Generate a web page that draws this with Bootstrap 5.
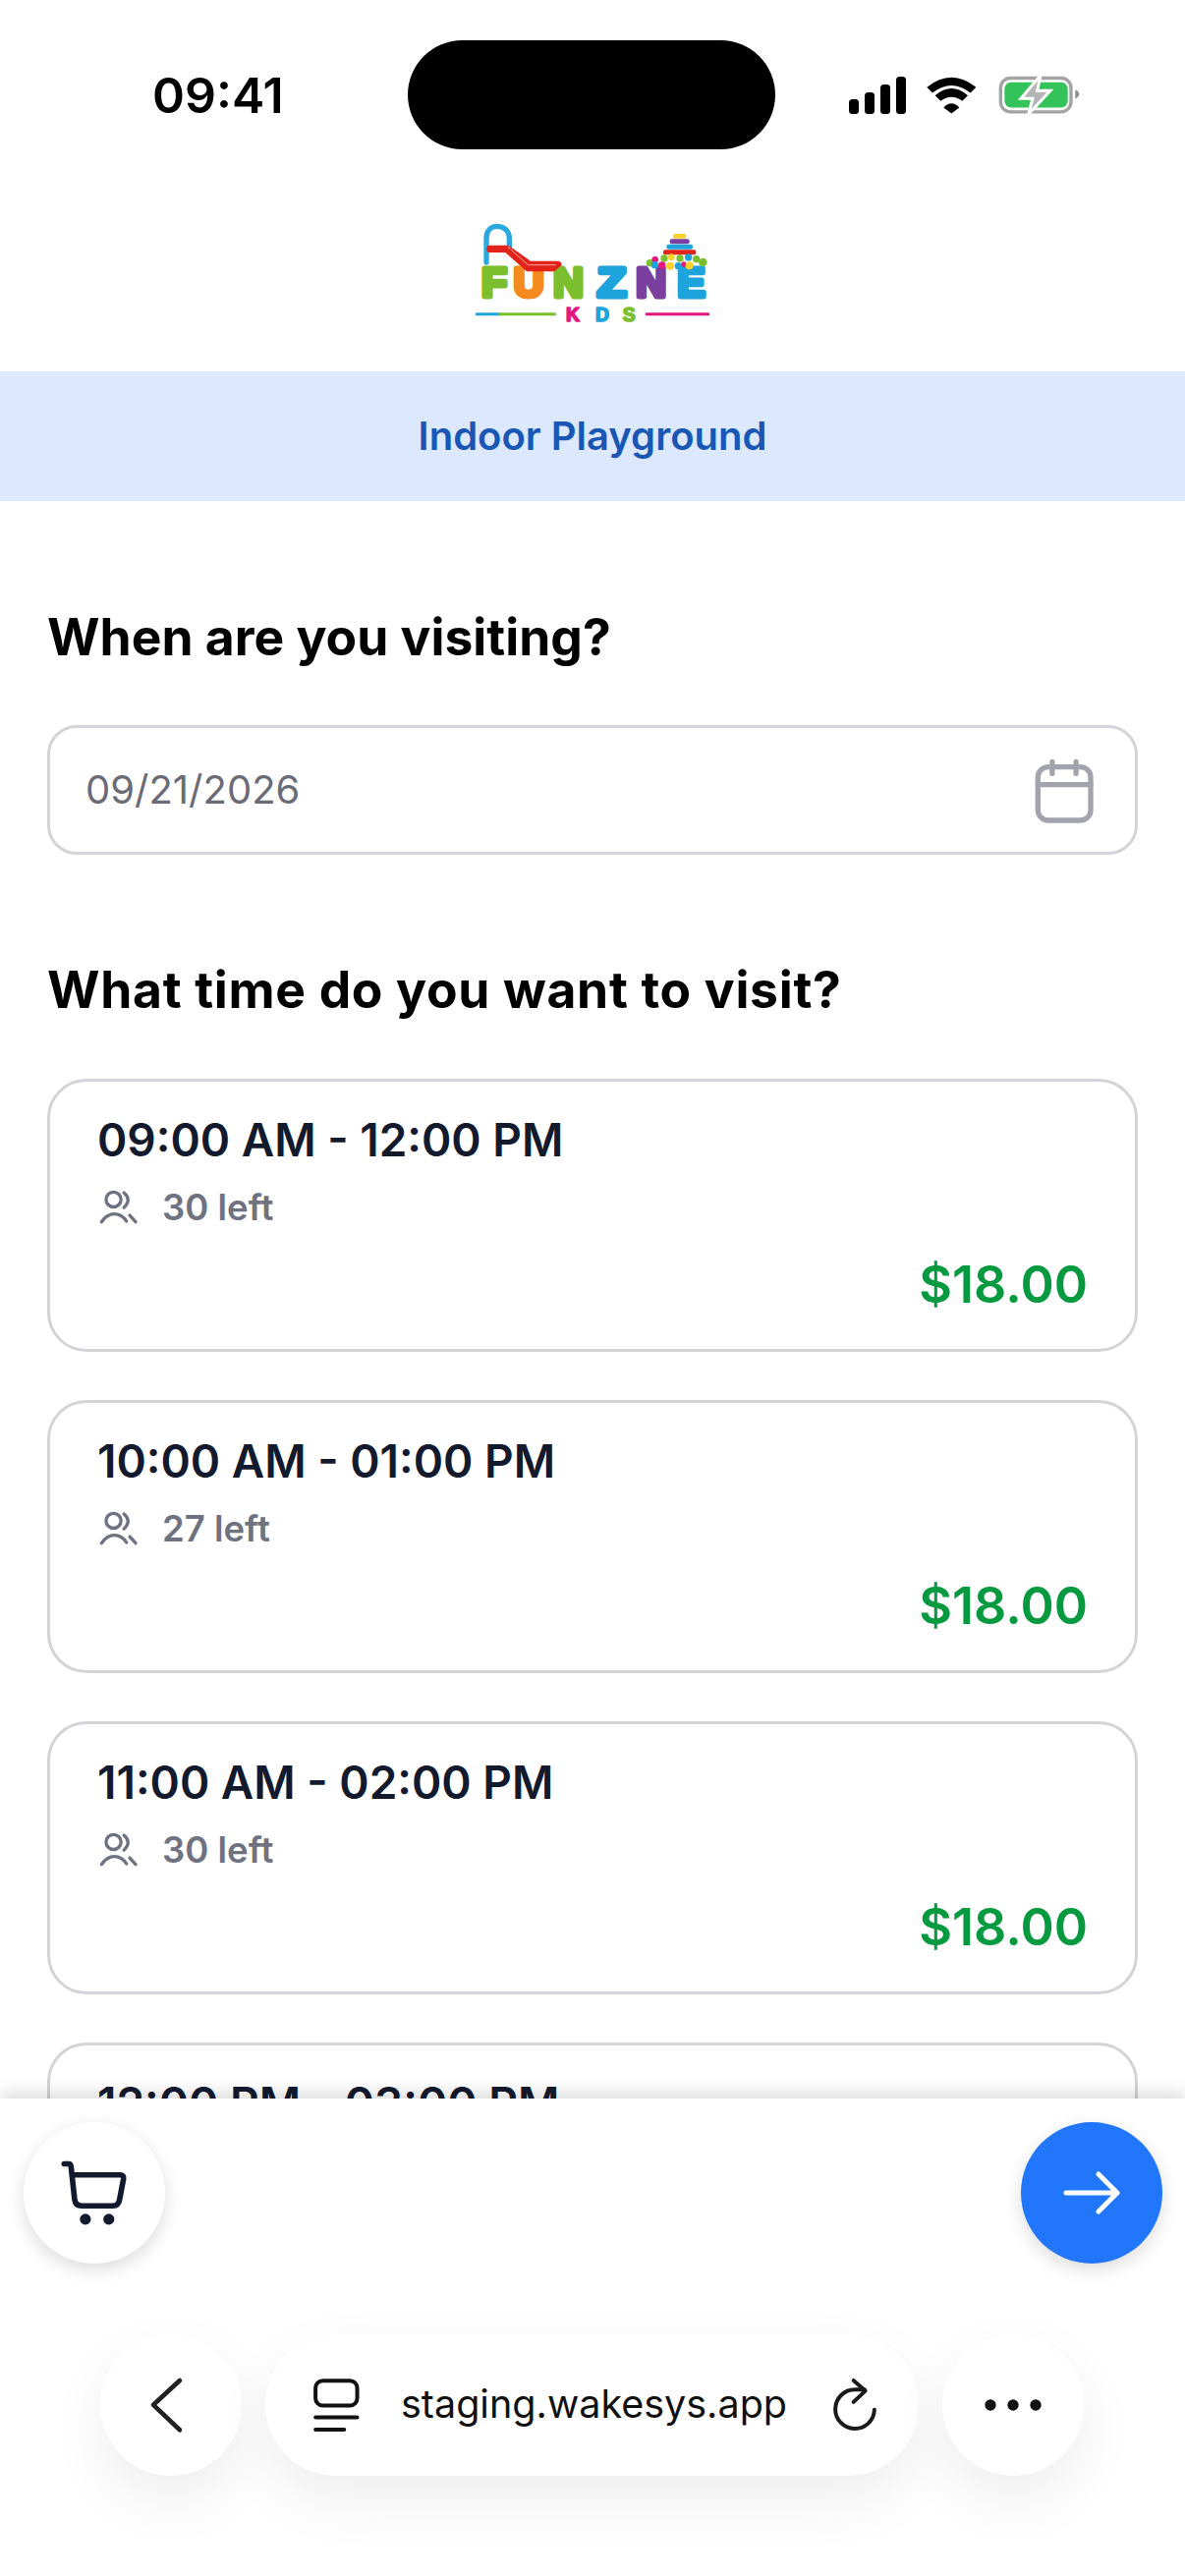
<!DOCTYPE html>
<html lang="en">
<head>
  <meta charset="UTF-8">
  <meta name="viewport" content="width=device-width, initial-scale=1.0">
  <title>Funzone Kids</title>
  <link href="https://cdn.jsdelivr.net/npm/bootstrap@5.3.3/dist/css/bootstrap.min.css" rel="stylesheet">
  <style>
    html, body { height: 2622px; }
    body {
      font-family: Inter, "Noto Sans", sans-serif;
      background: #fff;
      overflow: hidden;
    }
    .phone-page { width: 1206px; height: 2622px; }
    .status-row { height: 190px; padding: 41px 106px 38px 155px; }
    .status-time { font-size: 50px; font-weight: 600; color: #000; width: 260px; line-height: 113px; }
    .island { width: 375px; height: 111px; background: #000; border-radius: 56px; }
    .status-icons { height: 111px; margin-left: 75px; gap: 19px; }
    .logo-row { height: 188px; padding-right: 6px; }
    .logo-art { margin-top: -26px; }
    .venue-bar { height: 132px; background: #dbe8fe; color: #1a56b4; font-size: 40px; font-weight: 600; }
    .scroll-part { padding: 0 48px; height: 0; }
    .sec-title { font-size: 51.600px; font-weight: 700; color: #000; line-height: 64px; margin: 0; }
    .sec-title.first-title { margin-top: 106px; }
    .sec-title.wide-title { letter-spacing: .7px; }
    .date-box {
      height: 132px; margin: 58px 0 105px; padding: 0 40px 0 36px;
      border: 3px solid #d4d4d8; border-radius: 30px;
      color: #6b6b76; font-size: 40px;
    }
    .slot-list { gap: 49px; margin-top: 59px; }
    .slot-card {
      height: 278px; flex: none; padding: 28px 48px 0;
      border: 3px solid #d4d4d8; border-radius: 40px;
    }
    .slot-time { font-size: 46px; font-weight: 600; color: #141a2e; line-height: 62px; }
    .slot-left { font-size: 36.500px; font-weight: 600; color: #6f7280; line-height: 44px; margin-top: 16px; gap: 23px; }
    .slot-price { font-size: 52px; font-weight: 600; color: #059a3f; line-height: 64px; margin-top: 25px; }
    .bottom-part {
      height: 486px; position: relative; background: #fff;
      box-shadow: 0 -6px 16px rgba(0, 0, 0, .14);
    }
    .action-row { padding: 24px 23px 0 24px; }
    .round-btn {
      width: 144px; height: 144px; border-radius: 50%; background: #fff; flex: none;
      box-shadow: 0 6px 18px rgba(0, 0, 0, .14);
    }
    .round-btn.go-btn { background: #2176fb; }
    .browser-row { margin-top: 72px; padding-left: 102px; gap: 24px; }
    .browser-btn { box-shadow: 0 24px 60px rgba(0, 0, 0, .07); }
    .back-icon { margin-right: 12px; }
    .url-pill {
      width: 665px; height: 144px; border-radius: 72px; background: #fff; padding: 0 0 0 47px;
      box-shadow: 0 24px 60px rgba(0, 0, 0, .07); color: #111; font-size: 39.500px;
    }
    .url-text { margin-left: 41px; margin-right: 44px; white-space: nowrap; }
  </style>
</head>
<body>

<div class="phone-page d-flex flex-column">
  <div class="status-row d-flex align-items-start flex-shrink-0">
    <div class="status-time">09:41</div>
    <div class="island"></div>
    <div class="status-icons d-flex align-items-center">
      <svg width="58" height="38" viewBox="0 0 58 38"><rect x="0" y="23" width="10" height="15" rx="3.500"/><rect x="16" y="16" width="10" height="22" rx="3.500"/><rect x="32" y="8" width="10" height="30" rx="3.500"/><rect x="48" y="0" width="10" height="38" rx="3.500"/></svg>
      <svg width="55" height="42" viewBox="340 80 165 125"><path d="M347 118Q422 58 497 118L480 135Q422 90 364 135z"/><path d="M372 143Q422 100 472 143L455 160Q422 135 389 160z"/><path d="M398 180Q422 155 446 180L422 198z"/></svg>
      <svg width="85" height="41" viewBox="560 80 255 122"><rect x="570" y="90" width="215" height="103" rx="30" fill="none" stroke="#a3a3a3" stroke-width="10"/><rect x="582" y="103" width="193" height="77" rx="20" fill="#34c25b"/><path d="M798 125c8 3 12 10 12 14s-4 12-12 14z" fill="#8e8e8e"/><path d="M692 82 632 152H668L655 200 722 128H682z" fill="#b5b5b5" stroke="#fff" stroke-width="9"/></svg>
    </div>
  </div>

  <div class="logo-row d-flex justify-content-center align-items-center flex-shrink-0">
    <svg class="logo-art" width="320" height="140" viewBox="0 0 960 420">
      <path d="M165 198V125c0-24 14-37 33-37s37 13 37 37v28" fill="none" stroke="#29a9e0" stroke-width="16" stroke-linecap="round"/>
      <g font-family="Liberation Sans" font-weight="700" font-size="128" stroke-width="15" stroke-linejoin="round">
        <text x="150" y="303" fill="#7cbf2e" stroke="#7cbf2e">F</text>
        <text x="248" y="303" fill="#f58a1f" stroke="#f58a1f">U</text>
        <text x="369" y="303" fill="#7cbf2e" stroke="#7cbf2e">N</text>
        <text transform="translate(503 303) scale(1.14 1)" fill="#1ea4dc" stroke="#1ea4dc">Z</text>
        <text x="622" y="303" fill="#7b3fa0" stroke="#7b3fa0">N</text>
        <text x="748" y="303" fill="#1ea4dc" stroke="#1ea4dc">E</text>
      </g>
      <path d="M172 146h60l68 48h82c10 0 15 8 12 14l-22 18h-84l-65-58h-51c-8 0-9-20 0-22z" fill="#e2231a"/>
      <path d="M230 150l62 56h85" fill="none" stroke="#f7a8a0" stroke-width="3"/>
      <rect x="735" y="111" width="40" height="14" rx="6" fill="#fbd22c"/>
      <rect x="725" y="127" width="60" height="15" rx="6" fill="#7b3fa0"/>
      <rect x="715" y="143" width="80" height="15" rx="6" fill="#1ea4dc"/>
      <rect x="705" y="160" width="100" height="15" rx="6" fill="#e2231a"/>
      <g>
        <circle cx="664" cy="200" r="11" fill="#7cbf2e"/><circle cx="826" cy="198" r="13" fill="#7cbf2e"/>
        <circle cx="708" cy="186" r="11" fill="#7cbf2e"/><circle cx="806" cy="188" r="11" fill="#7cbf2e"/>
        <circle cx="680" cy="190" r="10" fill="#e5177e"/><circle cx="730" cy="182" r="10" fill="#fbd22c"/>
        <circle cx="756" cy="186" r="11" fill="#7cbf2e"/><circle cx="782" cy="183" r="11" fill="#1ea4dc"/>
        <circle cx="679" cy="206" r="11" fill="#1ea4dc"/><circle cx="701" cy="207" r="11" fill="#e5177e"/>
        <circle cx="726" cy="209" r="12" fill="#fbd22c"/><circle cx="751" cy="209" r="11" fill="#1ea4dc"/>
        <circle cx="768" cy="204" r="8" fill="#e5177e"/><circle cx="785" cy="208" r="12" fill="#fbd22c"/>
      </g>
      <g font-family="Liberation Sans" font-weight="700" font-size="58" stroke-width="5" stroke-linejoin="round">
        <text x="408" y="378" fill="#e5177e" stroke="#e5177e">K</text>
        <text x="498" y="378" fill="#1ea4dc" stroke="#1ea4dc">D</text>
        <text x="581" y="378" fill="#7cbf2e" stroke="#7cbf2e">S</text>
      </g>
      <path d="M136 356h70" stroke="#1ea4dc" stroke-width="9" stroke-linecap="round"/>
      <path d="M206 356h168" stroke="#7cbf2e" stroke-width="9" stroke-linecap="round"/>
      <path d="M654 356h188" stroke="#e5177e" stroke-width="9" stroke-linecap="round"/>
    </svg>
  </div>

  <div class="venue-bar d-flex justify-content-center align-items-center flex-shrink-0">Indoor Playground</div>

  <div class="scroll-part flex-grow-1 overflow-hidden">
    <h2 class="sec-title first-title">When are you visiting?</h2>
    <div class="date-box d-flex justify-content-between align-items-center">
      <span>09/21/2026</span>
      <svg width="63" height="67" viewBox="65 30 190 200" fill="none" stroke="#a3a3ad" stroke-width="16" stroke-linecap="round"><rect x="78" y="58" width="162" height="164" rx="32"/><path d="M78 112H240M122 42V78M195 42V78"/></svg>
    </div>
    <h2 class="sec-title wide-title">What time do you want to visit?</h2>
    <div class="slot-list d-flex flex-column">
      <div class="slot-card">
        <div class="slot-time">09:00 AM - 12:00 PM</div>
        <div class="slot-left d-flex align-items-center">
          <svg width="43" height="38" viewBox="115 70 130 115" fill="none" stroke="#6f7280" stroke-width="10" stroke-linecap="round"><circle cx="165" cy="103" r="23"/><path d="M197 82Q222 103 197 128M128 172C150 140 185 140 205 170M215 152 233 172"/></svg>
          <span>30 left</span>
        </div>
        <div class="slot-price text-end">$18.00</div>
      </div>
      <div class="slot-card">
        <div class="slot-time">10:00 AM - 01:00 PM</div>
        <div class="slot-left d-flex align-items-center">
          <svg width="43" height="38" viewBox="115 70 130 115" fill="none" stroke="#6f7280" stroke-width="10" stroke-linecap="round"><circle cx="165" cy="103" r="23"/><path d="M197 82Q222 103 197 128M128 172C150 140 185 140 205 170M215 152 233 172"/></svg>
          <span>27 left</span>
        </div>
        <div class="slot-price text-end">$18.00</div>
      </div>
      <div class="slot-card">
        <div class="slot-time">11:00 AM - 02:00 PM</div>
        <div class="slot-left d-flex align-items-center">
          <svg width="43" height="38" viewBox="115 70 130 115" fill="none" stroke="#6f7280" stroke-width="10" stroke-linecap="round"><circle cx="165" cy="103" r="23"/><path d="M197 82Q222 103 197 128M128 172C150 140 185 140 205 170M215 152 233 172"/></svg>
          <span>30 left</span>
        </div>
        <div class="slot-price text-end">$18.00</div>
      </div>
      <div class="slot-card">
        <div class="slot-time">12:00 PM - 03:00 PM</div>
      </div>
    </div>
  </div>

  <div class="bottom-part flex-shrink-0">
    <div class="action-row d-flex justify-content-between">
      <div class="round-btn d-flex justify-content-center align-items-center">
        <svg width="73" height="70" viewBox="60 80 220 210" fill="none" stroke="#141a2e" stroke-width="17" stroke-linecap="round" stroke-linejoin="round"><path d="M76 96H90Q96 96 97 104L108 205Q110 225 130 225H225Q243 225 246 205L258 142Q260 130 248 130H100"/><circle cx="141" cy="266" r="17" fill="#141a2e" stroke="none"/><circle cx="213" cy="266" r="17" fill="#141a2e" stroke="none"/></svg>
      </div>
      <div class="round-btn go-btn d-flex justify-content-center align-items-center">
        <svg width="58" height="44" viewBox="0 0 58 44" fill="none" stroke="#fff" stroke-width="5" stroke-linecap="round" stroke-linejoin="round"><path d="M3 22h52M36 3l19 19-19 19"/></svg>
      </div>
    </div>
    <div class="browser-row d-flex">
      <div class="round-btn browser-btn d-flex justify-content-center align-items-center">
        <svg class="back-icon" width="37" height="62" viewBox="60 50 110 185" fill="none" stroke="#222" stroke-width="14" stroke-linecap="round" stroke-linejoin="round"><path d="M158 68 78 142 158 218"/></svg>
      </div>
      <div class="url-pill d-flex align-items-center">
        <svg class="flex-shrink-0" width="50" height="57" viewBox="560 60 150 172" fill="none" stroke="#111" stroke-width="12" stroke-linecap="round"><rect x="572" y="70" width="128" height="76" rx="22"/><path d="M572 182H700M572 220H660"/></svg>
        <span class="url-text">staging.wakesys.app</span>
        <svg class="flex-shrink-0" width="50" height="58" viewBox="75 50 150 175" fill="none" stroke="#1a1a1a" stroke-width="12" stroke-linecap="round" stroke-linejoin="round"><path d="M210 152A60 60 0 1 1 150 90H180"/><path d="M146 62 182 94 146 128"/></svg>
      </div>
      <div class="round-btn browser-btn d-flex justify-content-center align-items-center">
        <svg width="60" height="14" viewBox="0 0 60 14" fill="#111"><circle cx="7" cy="7" r="5.700"/><circle cx="30" cy="7" r="5.700"/><circle cx="53" cy="7" r="5.700"/></svg>
      </div>
    </div>
  </div>
</div>

<script src="https://cdn.jsdelivr.net/npm/bootstrap@5.3.3/dist/js/bootstrap.bundle.min.js"></script>
</body>
</html>
